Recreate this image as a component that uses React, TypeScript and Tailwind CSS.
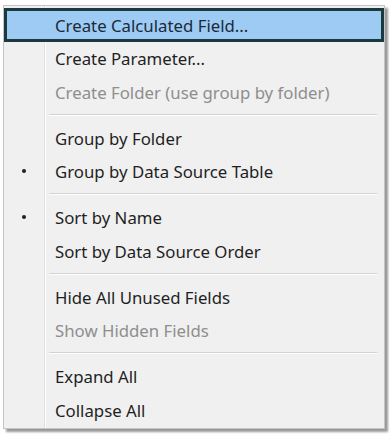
type Item =
  | { kind: 'item'; label: string; disabled?: boolean; bullet?: boolean; active?: boolean }
  | { kind: 'sep' };

const items: Item[] = [
  { kind: 'item', label: 'Create Calculated Field...', active: true },
  { kind: 'item', label: 'Create Parameter...' },
  { kind: 'item', label: 'Create Folder (use group by folder)', disabled: true },
  { kind: 'sep' },
  { kind: 'item', label: 'Group by Folder' },
  { kind: 'item', label: 'Group by Data Source Table', bullet: true },
  { kind: 'sep' },
  { kind: 'item', label: 'Sort by Name', bullet: true },
  { kind: 'item', label: 'Sort by Data Source Order' },
  { kind: 'sep' },
  { kind: 'item', label: 'Hide All Unused Fields' },
  { kind: 'item', label: 'Show Hidden Fields', disabled: true },
  { kind: 'sep' },
  { kind: 'item', label: 'Expand All' },
  { kind: 'item', label: 'Collapse All' },
];

export default function App() {
  return (
    <div className="w-[391px] h-[434px] bg-white pt-[5px] pl-[3px] font-['Noto_Sans',sans-serif]">
      {/* context menu */}
      <div className="w-[382px] border border-[#c4c4c4] bg-[#f0f0f0] bg-[linear-gradient(to_right,#f0f0f0_40px,#e0e0e0_40px,#e0e0e0_41px,#ffffff_41px,#ffffff_42px,#f0f0f0_42px)] pt-[2px] pb-px shadow-[3px_3px_2px_rgba(0,0,0,0.4)]">
        {items.map((it, i) =>
          it.kind === 'sep' ? (
            <div key={i} className="h-[12.5px] flex flex-col justify-center ml-[45px] mr-[7px]">
              <div className="h-px bg-[#d3d3d3]" />
              <div className="h-px bg-white" />
            </div>
          ) : (
            <div
              key={i}
              className={`h-[33.5px] flex items-center text-[16.8px] ${
                it.active
                  ? 'bg-[#9dcbf4] shadow-[inset_0_0_0_3px_#1b3a3e] text-[#1b2a3a]'
                  : it.disabled
                    ? 'text-[#8e8e8e]'
                    : 'text-[#1f1f1f]'
              }`}
            >
              <div className="w-[41px] flex justify-center items-center">
                {it.bullet && <div className="w-[4px] h-[4px] rounded-full bg-[#1f1f1f] ml-[-1px]" />}
              </div>
              <span className="pl-[10px] pt-px">{it.label}</span>
            </div>
          )
        )}
      </div>
    </div>
  );
}
